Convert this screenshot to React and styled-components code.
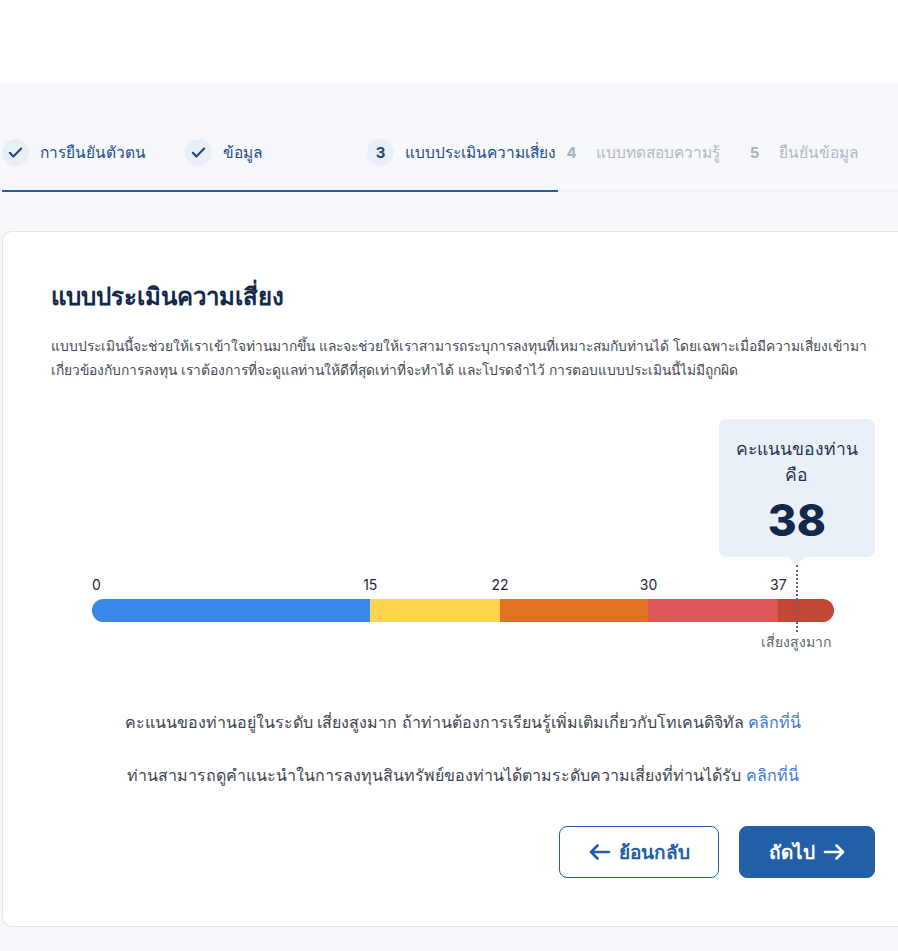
import React from "react";
import styled, { createGlobalStyle } from "styled-components";

const GlobalStyle = createGlobalStyle`
  html, body {
    margin: 0;
    padding: 0;
    overflow: hidden;
    background: #f6f8fb;
    font-family: "Inter", "Noto Sans", sans-serif;
  }
  * { box-sizing: border-box; }
`;

const MAX = 40;
const SCORE = 38;
const segments = [
  { from: 0, to: 15, color: "#3987e9" },
  { from: 15, to: 22, color: "#fdd44d" },
  { from: 22, to: 30, color: "#e27223" },
  { from: 30, to: 37, color: "#dd5757" },
  { from: 37, to: 40, color: "#c24735" },
];
const marks = [0, 15, 22, 30, 37];

const steps = [
  { label: "การยืนยันตัวตน", state: "done", width: 183 },
  { label: "ข้อมูล", state: "done", width: 182 },
  { label: "แบบประเมินความเสี่ยง", state: "active", num: 3, width: 191 },
  { label: "แบบทดสอบความรู้", state: "todo", num: 4, width: 183 },
  { label: "ยืนยันข้อมูล", state: "todo", num: 5, width: 200 },
];

const Page = styled.div`
  width: 100%;
  min-height: 951px;
  display: flex;
  flex-direction: column;
`;

const TopBar = styled.div`
  height: 83px;
  background: #ffffff;
`;

const Main = styled.div`
  padding: 0 0 0 2px;
  display: flex;
  flex-direction: column;
`;

const Stepper = styled.div`
  margin-top: 40px;
  display: flex;
  border-bottom: 2px solid #edf0f5;
  width: 1000px;
`;

const Step = styled.div`
  flex: 0 0 ${({ $w }) => $w}px;
  height: 69px;
  display: flex;
  align-items: center;
  gap: 11px;
  padding-bottom: 8px;
  margin-bottom: -2px;
  border-bottom: 2px solid ${({ $on }) => ($on ? "#2160a8" : "transparent")};
  white-space: nowrap;
`;

const Circle = styled.div`
  width: 27px;
  height: 27px;
  border-radius: 50%;
  background: ${({ $on }) => ($on ? "#e9eff7" : "transparent")};
  display: flex;
  align-items: center;
  justify-content: center;
  font-size: 15px;
  font-weight: 700;
  color: ${({ $on }) => ($on ? "#23467a" : "#aab2bd")};
`;

const StepLabel = styled.span`
  font-size: 15.5px;
  font-weight: 500;
  color: ${({ $on }) => ($on ? "#254e8c" : "#b1b8c2")};
`;

const Card = styled.div`
  margin-top: 39px;
  width: 930px;
  background: #ffffff;
  border: 1px solid #e1e5eb;
  border-radius: 10px;
  padding: 48px 56px 48px 48px;
  display: flex;
  flex-direction: column;
`;

const Title = styled.h1`
  margin: 0;
  font-size: 24px;
  font-weight: 700;
  color: #13294b;
  line-height: 34px;
`;

const Desc = styled.p`
  margin: 20px 0 0;
  font-size: 13.8px;
  line-height: 24px;
  color: #444b55;
  white-space: nowrap;
`;

const ChartWrap = styled.div`
  position: relative;
  margin: 37px 0 0 41px;
  width: 742px;
  height: 232px;
`;

const Tooltip = styled.div`
  position: absolute;
  left: ${({ $x }) => $x}px;
  top: 0;
  transform: translateX(-50%);
  width: 156px;
  height: 138px;
  background: #eaf0f8;
  border-radius: 8px;
  display: flex;
  flex-direction: column;
  align-items: center;
  padding-top: 17px;
  &::after {
    content: "";
    position: absolute;
    bottom: -8px;
    left: 50%;
    transform: translateX(-50%);
    border-left: 8px solid transparent;
    border-right: 8px solid transparent;
    border-top: 8px solid #eaf0f8;
  }
`;

const TipText = styled.div`
  font-size: 17.5px;
  font-weight: 500;
  line-height: 26px;
  color: #1f3352;
  text-align: center;
`;

const TipScore = styled.div`
  margin-top: 6px;
  font-size: 44px;
  font-weight: 800;
  line-height: 52px;
  color: #13294b;
`;

const Mark = styled.span`
  position: absolute;
  top: 157px;
  left: ${({ $x }) => $x}px;
  transform: translateX(${({ $first }) => ($first ? "0" : "-50%")});
  font-size: 14px;
  color: #1f2a3a;
  line-height: 18px;
`;

const Bar = styled.div`
  position: absolute;
  top: 180px;
  left: 0;
  width: 100%;
  height: 23px;
  border-radius: 12px;
  overflow: hidden;
  display: flex;
`;

const Seg = styled.div`
  height: 100%;
  background: ${({ $c }) => $c};
`;

const Dash = styled.div`
  position: absolute;
  left: ${({ $x }) => $x}px;
  top: 146px;
  height: 67px;
  border-left: 2px dotted #5b6678;
`;

const LevelText = styled.span`
  position: absolute;
  right: 3px;
  top: 212px;
  font-size: 14px;
  color: #5d6470;
`;

const Info = styled.p`
  margin: ${({ $first }) => ($first ? "60px" : "30px")} 0 0;
  text-align: center;
  font-size: 16px;
  line-height: 23px;
  color: #3d4551;
  white-space: nowrap;
`;

const Link = styled.a`
  color: #3a79e0;
  text-decoration: none;
  cursor: pointer;
`;

const Actions = styled.div`
  margin-top: 39px;
  display: flex;
  justify-content: flex-end;
  gap: 20px;
`;

const Button = styled.button`
  height: 52px;
  width: ${({ $w }) => $w}px;
  border-radius: 8px;
  border: 1px solid #2160a8;
  background: ${({ $primary }) => ($primary ? "#2160a8" : "#ffffff")};
  color: ${({ $primary }) => ($primary ? "#ffffff" : "#2160a8")};
  font-family: inherit;
  font-size: 19px;
  font-weight: 700;
  display: flex;
  align-items: center;
  justify-content: center;
  gap: 8px;
  cursor: pointer;
`;

const Check = () => (
  <svg width="17" height="17" viewBox="0 0 24 24" fill="none" stroke="#23467a" strokeWidth="3" strokeLinecap="round" strokeLinejoin="round">
    <path d="M4 12.5l5 5L20 6.5" />
  </svg>
);

const Arrow = ({ left }) => (
  <svg width="23" height="18" viewBox="0 0 23 18" fill="none" stroke="currentColor" strokeWidth="2.6" strokeLinecap="round" strokeLinejoin="round">
    {left ? <path d="M21 9H3M9.5 2.5L3 9l6.5 6.5" /> : <path d="M2 9h18M13.5 2.5L20 9l-6.5 6.5" />}
  </svg>
);

const px = (v) => (v / MAX) * 742;

export default function App() {
  return (
    <Page>
      <GlobalStyle />
      <TopBar />
      <Main>
        <Stepper>
          {steps.map((s) => {
            const on = s.state !== "todo";
            return (
              <Step key={s.label} $w={s.width} $on={on}>
                <Circle $on={on}>{s.state === "done" ? <Check /> : s.num}</Circle>
                <StepLabel $on={on}>{s.label}</StepLabel>
              </Step>
            );
          })}
        </Stepper>
        <Card>
          <Title>แบบประเมินความเสี่ยง</Title>
          <Desc>
            แบบประเมินนี้จะช่วยให้เราเข้าใจท่านมากขึ้น และจะช่วยให้เราสามารถระบุการลงทุนที่เหมาะสมกับท่านได้ โดยเฉพาะเมื่อมีความเสี่ยงเข้ามา
            <br />
            เกี่ยวข้องกับการลงทุน เราต้องการที่จะดูแลท่านให้ดีที่สุดเท่าที่จะทำได้ และโปรดจำไว้ การตอบแบบประเมินนี้ไม่มีถูกผิด
          </Desc>
          <ChartWrap>
            <Tooltip $x={px(SCORE)}>
              <TipText>
                คะแนนของท่าน
                <br />
                คือ
              </TipText>
              <TipScore>{SCORE}</TipScore>
            </Tooltip>
            {marks.map((m, i) => (
              <Mark key={m} $x={px(m)} $first={i === 0}>
                {m}
              </Mark>
            ))}
            <Bar>
              {segments.map((s) => (
                <Seg key={s.from} $c={s.color} style={{ width: px(s.to - s.from) }} />
              ))}
            </Bar>
            <Dash style={{ left: px(SCORE) - 1 }} />
            <LevelText>เสี่ยงสูงมาก</LevelText>
          </ChartWrap>
          <Info $first>
            คะแนนของท่านอยู่ในระดับ เสี่ยงสูงมาก ถ้าท่านต้องการเรียนรู้เพิ่มเติมเกี่ยวกับโทเคนดิจิทัล <Link>คลิกที่นี่</Link>
          </Info>
          <Info>
            ท่านสามารถดูคำแนะนำในการลงทุนสินทรัพย์ของท่านได้ตามระดับความเสี่ยงที่ท่านได้รับ <Link>คลิกที่นี่</Link>
          </Info>
          <Actions>
            <Button $w={160}>
              <Arrow left />
              ย้อนกลับ
            </Button>
            <Button $w={136} $primary>
              ถัดไป
              <Arrow />
            </Button>
          </Actions>
        </Card>
      </Main>
    </Page>
  );
}
